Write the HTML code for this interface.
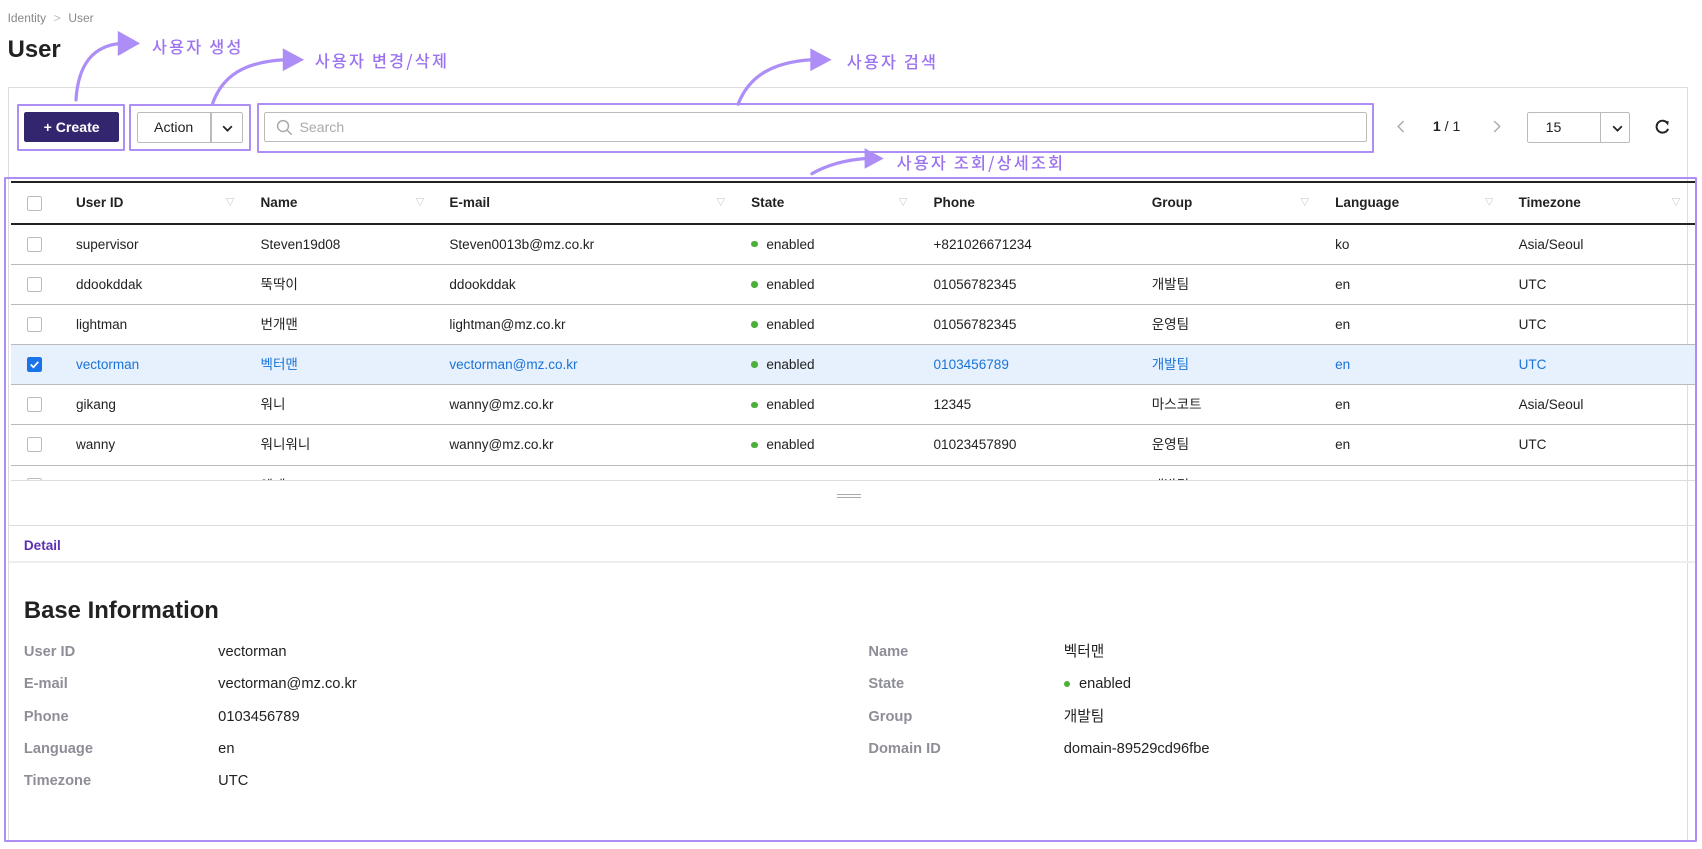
<!DOCTYPE html>
<html><head><meta charset="utf-8"><style>
html,body{margin:0;padding:0;background:#fff;width:1702px;height:849px;overflow:hidden}
#w{zoom:1.0855;position:relative;width:1568px;height:782px;font-family:"Liberation Sans","Noto Sans CJK KR",sans-serif;color:#222;font-size:12.5px}
.a{position:absolute;white-space:nowrap;line-height:16px}
.pr{position:absolute;border:2.5px solid #ad8ef7;border-radius:1px;box-sizing:border-box}
.ann{position:absolute;color:#9b72f0;font-family:"Noto Sans CJK KR",sans-serif;font-size:15px;font-weight:500;letter-spacing:2px;white-space:nowrap}
.cb{position:absolute;left:15px;top:11px;width:12px;height:12px;border:1px solid #bbb;border-radius:2px;background:#fff}
.row{position:absolute;left:10px;width:1552px;height:36px;border-bottom:1px solid #bbb}
.row .a{top:10px}
.dot{display:inline-block;width:6px;height:6px;border-radius:50%;background:#4caf3a;margin-right:8px;vertical-align:1px}
.h{font-weight:bold;font-size:12.5px}
.s{position:absolute;color:#aaa;font-size:8px}
.lb{position:absolute;color:#8e8e98;font-weight:bold;font-size:13.5px;line-height:18px}
.vl{position:absolute;font-size:13.5px;line-height:18px}
</style></head><body><div id="w">
<div class="a" style="left:7px;top:9px;font-size:11px;color:#888">Identity <span style="color:#bbb;margin:0 4px">&gt;</span> User</div>
<div class="a" style="left:7px;top:34px;font-size:22px;font-weight:bold;color:#222;line-height:24px">User</div>

<div style="position:absolute;left:7px;top:80px;width:1548px;height:695px;border:1px solid #ddd;box-sizing:border-box"></div>

<div style="position:absolute;left:22px;top:103px;width:88px;height:28px;background:#33266e;border-radius:2px;color:#fff;font-weight:bold;font-size:13px;line-height:28px;text-align:center">+ Create</div>
<div style="position:absolute;left:126px;top:103px;width:98px;height:29px;border:1px solid #bbb;box-sizing:border-box;border-radius:2px">
<div class="a" style="left:15px;top:6px;font-size:13px">Action</div>
<div style="position:absolute;left:67px;top:0;width:1px;height:27px;background:#bbb"></div>
<svg style="position:absolute;left:77px;top:9px" width="12" height="10"><path d="M2 3l4 4 4-4" stroke="#222" stroke-width="1.6" fill="none"/></svg></div>
<div style="position:absolute;left:243px;top:103px;width:1016px;height:28px;border:1px solid #bbb;box-sizing:border-box;border-radius:2px">
<svg style="position:absolute;left:10px;top:6px" width="16" height="16"><circle cx="6.5" cy="6.5" r="5" stroke="#aaa" stroke-width="1.4" fill="none"/><path d="M10 10l4.5 4.5" stroke="#aaa" stroke-width="1.4"/></svg>
<div class="a" style="left:32px;top:6px;color:#aaa;font-size:13px">Search</div></div>
<svg style="position:absolute;left:1286px;top:111px" width="10" height="12"><path d="M7 1L2 6l5 5" stroke="#aaa" stroke-width="1.3" fill="none"/></svg>
<div class="a" style="left:1320px;top:109px;font-size:13px"><b>1</b> / 1</div>
<svg style="position:absolute;left:1374px;top:111px" width="10" height="12"><path d="M3 1l5 5-5 5" stroke="#aaa" stroke-width="1.3" fill="none"/></svg>
<div style="position:absolute;left:1407px;top:103px;width:95px;height:29px;border:1px solid #bbb;box-sizing:border-box;border-radius:2px">
<div class="a" style="left:16px;top:6px;font-size:13px">15</div>
<div style="position:absolute;left:66px;top:0;width:1px;height:27px;background:#bbb"></div>
<svg style="position:absolute;left:76px;top:9px" width="12" height="10"><path d="M2 3l4 4 4-4" stroke="#222" stroke-width="1.6" fill="none"/></svg></div>
<svg style="position:absolute;left:1524px;top:109px" width="16" height="16"><path d="M12.5 5A5.5 5.5 0 1 0 13 10" stroke="#222" stroke-width="1.8" fill="none"/><path d="M9.5 2.5l4 .5-.5 4z" fill="#222"/></svg>

<div style="position:absolute;left:10px;top:167px;width:1552px;height:2px;background:#222"></div>
<div style="position:absolute;left:10px;top:169px;width:1552px;height:36px;border-bottom:2px solid #222">
<div class="cb" style="top:12px"></div>
<div class="a h" style="left:60px;top:10px">User ID</div><div class="s" style="left:198px;top:12px">▽</div>
<div class="a h" style="left:230px;top:10px">Name</div><div class="s" style="left:373px;top:12px">▽</div>
<div class="a h" style="left:404px;top:10px">E-mail</div><div class="s" style="left:650px;top:12px">▽</div>
<div class="a h" style="left:682px;top:10px">State</div><div class="s" style="left:818px;top:12px">▽</div>
<div class="a h" style="left:850px;top:10px">Phone</div>
<div class="a h" style="left:1051px;top:10px">Group</div><div class="s" style="left:1188px;top:12px">▽</div>
<div class="a h" style="left:1220px;top:10px">Language</div><div class="s" style="left:1358px;top:12px">▽</div>
<div class="a h" style="left:1389px;top:10px">Timezone</div><div class="s" style="left:1530px;top:12px">▽</div>
</div>

<div style="position:absolute;left:0;top:0;width:1568px;height:442px;overflow:hidden">
<div class="row" style="top:207px"><div class="cb"></div><div class="a" style="left:60px">supervisor</div><div class="a" style="left:230px">Steven19d08</div><div class="a" style="left:404px">Steven0013b@mz.co.kr</div><div class="a" style="left:682px"><span class="dot"></span>enabled</div><div class="a" style="left:850px">+821026671234</div><div class="a" style="left:1220px">ko</div><div class="a" style="left:1389px">Asia/Seoul</div></div>
<div class="row" style="top:244px"><div class="cb"></div><div class="a" style="left:60px">ddookddak</div><div class="a" style="left:230px">뚝딱이</div><div class="a" style="left:404px">ddookddak</div><div class="a" style="left:682px"><span class="dot"></span>enabled</div><div class="a" style="left:850px">01056782345</div><div class="a" style="left:1051px">개발팀</div><div class="a" style="left:1220px">en</div><div class="a" style="left:1389px">UTC</div></div>
<div class="row" style="top:281px"><div class="cb"></div><div class="a" style="left:60px">lightman</div><div class="a" style="left:230px">번개맨</div><div class="a" style="left:404px">lightman@mz.co.kr</div><div class="a" style="left:682px"><span class="dot"></span>enabled</div><div class="a" style="left:850px">01056782345</div><div class="a" style="left:1051px">운영팀</div><div class="a" style="left:1220px">en</div><div class="a" style="left:1389px">UTC</div></div>
<div class="row" style="top:318px;background:#e6f1fd;color:#1a73d8"><div class="cb" style="background:#1a73e8;border-color:#1a73e8"><svg width="12" height="12" style="position:absolute;left:0;top:0"><path d="M2.5 6l2.5 2.5 4.5-5" stroke="#fff" stroke-width="1.6" fill="none"/></svg></div><div class="a" style="left:60px">vectorman</div><div class="a" style="left:230px">벡터맨</div><div class="a" style="left:404px">vectorman@mz.co.kr</div><div class="a" style="left:682px;color:#222"><span class="dot"></span>enabled</div><div class="a" style="left:850px">0103456789</div><div class="a" style="left:1051px">개발팀</div><div class="a" style="left:1220px">en</div><div class="a" style="left:1389px">UTC</div></div>
<div class="row" style="top:355px"><div class="cb"></div><div class="a" style="left:60px">gikang</div><div class="a" style="left:230px">워니</div><div class="a" style="left:404px">wanny@mz.co.kr</div><div class="a" style="left:682px"><span class="dot"></span>enabled</div><div class="a" style="left:850px">12345</div><div class="a" style="left:1051px">마스코트</div><div class="a" style="left:1220px">en</div><div class="a" style="left:1389px">Asia/Seoul</div></div>
<div class="row" style="top:392px"><div class="cb"></div><div class="a" style="left:60px">wanny</div><div class="a" style="left:230px">워니워니</div><div class="a" style="left:404px">wanny@mz.co.kr</div><div class="a" style="left:682px"><span class="dot"></span>enabled</div><div class="a" style="left:850px">01023457890</div><div class="a" style="left:1051px">운영팀</div><div class="a" style="left:1220px">en</div><div class="a" style="left:1389px">UTC</div></div>
<div class="row" style="top:429px"><div class="cb"></div><div class="a" style="left:60px">mzuser</div><div class="a" style="left:230px">엠제</div><div class="a" style="left:404px">mzuser@mz.co.kr</div><div class="a" style="left:682px"><span class="dot"></span>enabled</div><div class="a" style="left:850px">01023456789</div><div class="a" style="left:1051px">개발팀</div><div class="a" style="left:1220px">en</div><div class="a" style="left:1389px">UTC</div></div>
</div>
<div style="position:absolute;left:10px;top:442px;width:1552px;height:1px;background:#ddd"></div>
<div style="position:absolute;left:771px;top:455px;width:22px;height:1px;background:#aaa"></div>
<div style="position:absolute;left:771px;top:458px;width:22px;height:1px;background:#aaa"></div>
<div style="position:absolute;left:8px;top:484px;width:1554px;height:1px;background:#ddd"></div>
<div class="a" style="left:22px;top:495px;color:#5b2fb5;font-weight:bold;font-size:12.5px">Detail</div>
<div style="position:absolute;left:8px;top:517px;width:1554px;height:2px;background:#eee"></div>
<div class="a" style="left:22px;top:550px;font-size:22px;font-weight:bold;color:#222;line-height:26px">Base Information</div>
<div class="lb" style="left:22px;top:592px">User ID</div><div class="vl" style="left:201px;top:592px">vectorman</div>
<div class="lb" style="left:22px;top:622px">E-mail</div><div class="vl" style="left:201px;top:622px">vectorman@mz.co.kr</div>
<div class="lb" style="left:22px;top:652px">Phone</div><div class="vl" style="left:201px;top:652px">0103456789</div>
<div class="lb" style="left:22px;top:682px">Language</div><div class="vl" style="left:201px;top:682px">en</div>
<div class="lb" style="left:22px;top:711px">Timezone</div><div class="vl" style="left:201px;top:711px">UTC</div>
<div class="lb" style="left:800px;top:592px">Name</div><div class="vl" style="left:980px;top:592px">벡터맨</div>
<div class="lb" style="left:800px;top:622px">State</div><div class="vl" style="left:980px;top:622px"><span class="dot"></span>enabled</div>
<div class="lb" style="left:800px;top:652px">Group</div><div class="vl" style="left:980px;top:652px">개발팀</div>
<div class="lb" style="left:800px;top:682px">Domain ID</div><div class="vl" style="left:980px;top:682px">domain-89529cd96fbe</div>

<div class="pr" style="left:16px;top:96px;width:99px;height:43px"></div>
<div class="pr" style="left:119px;top:96px;width:112px;height:43px"></div>
<div class="pr" style="left:237px;top:95px;width:1029px;height:46px"></div>
<div class="pr" style="left:4px;top:163px;width:1559px;height:613px"></div>
<svg style="position:absolute;left:0;top:0" width="1568" height="200" fill="none" stroke="#ad8ef7" stroke-width="3" stroke-linecap="round">
<path d="M70 92C72 60 85 42 112 40"/><path d="M110 31l16 9-16 9z" fill="#ad8ef7"/>
<path d="M196 95C205 70 225 57 262 55"/><path d="M262 47l15 8-15 8z" fill="#ad8ef7"/>
<path d="M680 96C690 70 712 57 748 55"/><path d="M748 47l15 8-15 8z" fill="#ad8ef7"/>
<path d="M748 160C762 152 780 147 798 146"/><path d="M798 139l13 7-13 7z" fill="#ad8ef7"/>
</svg>
<div class="ann" style="left:140px;top:31px">사용자 생성</div>
<div class="ann" style="left:290px;top:44px">사용자 변경/삭제</div>
<div class="ann" style="left:780px;top:45px">사용자 검색</div>
<div class="ann" style="left:826px;top:138px">사용자 조회/상세조회</div>
</div></body></html>
